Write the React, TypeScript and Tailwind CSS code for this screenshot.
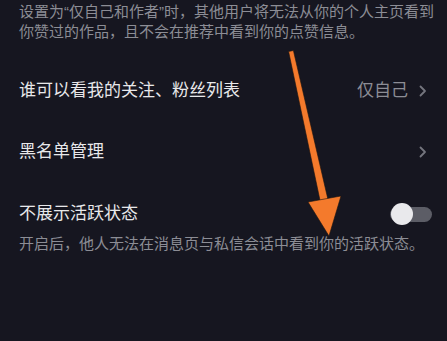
import React from "react";

const Chevron = () => (
  <svg width="8" height="12" viewBox="0 0 8 12" fill="none">
    <path d="M1.5 1.5 L6 6 L1.5 10.5" stroke="#74757e" strokeWidth="1.8" strokeLinecap="round" strokeLinejoin="round" />
  </svg>
);

export default function App() {
  return (
    <div
      className="relative w-[447px] h-[341px] overflow-hidden bg-[#161620] text-[#e8e8ea]"
      style={{ fontFamily: '"Liberation Sans", "Noto Sans CJK SC", sans-serif' }}
    >
      <p className="pt-[2px] pl-[19px] text-[15px] leading-[20px] text-[#8c8d95]">
        设置为“仅自己和作者”时，其他用户将无法从你的个人主页看到
        <br />
        你赞过的作品，且不会在推荐中看到你的点赞信息。
      </p>

      <div className="mt-[19px] h-[60px] flex items-center justify-between pl-[19px] pr-[20px]">
        <span className="text-[17px]">谁可以看我的关注、粉丝列表</span>
        <div className="flex items-center gap-[11px]">
          <span className="text-[17px] text-[#8c8d95]">仅自己</span>
          <Chevron />
        </div>
      </div>

      <div className="h-[62px] flex items-center justify-between pl-[19px] pr-[20px]">
        <span className="text-[17px]">黑名单管理</span>
        <Chevron />
      </div>

      <div className="mt-[19px] flex items-center justify-between pl-[19px] pr-[15px]">
        <span className="text-[17px] leading-[24px]">不展示活跃状态</span>
        <div className="relative w-[42px] h-[15px] rounded-full bg-[#5c5d66]">
          <div className="absolute left-[1px] top-[-4px] w-[22px] h-[22px] rounded-full bg-[#e9e9ec]" />
        </div>
      </div>
      <p className="mt-[8px] pl-[19px] text-[15px] leading-[20px] text-[#8c8d95]">
        开启后，他人无法在消息页与私信会话中看到你的活跃状态。
      </p>

      <svg className="absolute left-0 top-0" width="447" height="341" viewBox="0 0 447 341">
        <polygon
          points="288.6,51.5 293.4,50.5 327.9,199.2 320.1,200.8"
          fill="#f47a2c"
          stroke="#1a1410"
          strokeWidth="0.6"
        />
        <polygon points="308,202 341,196 329,236" fill="#f47a2c" stroke="#1a1410" strokeWidth="0.6" />
      </svg>
    </div>
  );
}
